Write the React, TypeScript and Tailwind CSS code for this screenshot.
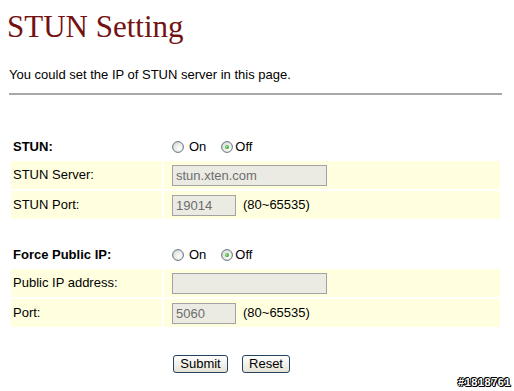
import React from 'react';

// Radio in the old XP look: grey-blue ring, green dot when checked
function Radio({ checked }: { checked?: boolean }) {
  return (
    <svg width="12" height="12" viewBox="0 0 12 12" className="shrink-0">
      <defs>
        <radialGradient id="rfill" cx="0.65" cy="0.65" r="0.7">
          <stop offset="0" stopColor="#ffffff" />
          <stop offset="1" stopColor="#dcdcd4" />
        </radialGradient>
        <radialGradient id="rdot" cx="0.4" cy="0.4" r="0.6">
          <stop offset="0" stopColor="#a6e8a0" />
          <stop offset="1" stopColor="#21a121" />
        </radialGradient>
      </defs>
      <circle cx="6" cy="6" r="5.4" fill="url(#rfill)" stroke="#5f7383" strokeWidth="1" />
      {checked && <circle cx="6" cy="6" r="2" fill="url(#rdot)" />}
    </svg>
  );
}

function OnOff() {
  return (
    <div className="flex items-center text-[13px]">
      <Radio />
      <span className="ml-[5px]">On</span>
      <span className="ml-[15px]">
        <Radio checked />
      </span>
      <span className="ml-[2px]">Off</span>
    </div>
  );
}

function TextBox({ value, width }: { value: string; width: string }) {
  return (
    <div
      className={`${width} h-[21px] border border-[#a3a3a3] bg-[#ebebe4] text-[#6d6d6d] text-[13px] leading-[19px] pl-[3px]`}
    >
      {value}
    </div>
  );
}

const range = <span className="ml-[7px] text-[13px]">(80~65535)</span>;

export default function App() {
  return (
    <div className="relative w-[514px] h-[391px] overflow-hidden bg-white text-black font-['Liberation_Sans',Arial,sans-serif]">
      <div className="pl-[9px]">
        {/* Header */}
        <h1 className="pt-[11px] pl-[-2px] -ml-[2px] font-['Liberation_Serif','Times_New_Roman',serif] text-[31px] leading-[31px] text-[#731212]">
          STUN Setting
        </h1>
        <p className="mt-[25px] text-[13px] leading-[15px]">
          You could set the IP of STUN server in this page.
        </p>
        <div className="mt-[11px] w-[493px] h-[2px] bg-[#a8a8a8]" />

        {/* Settings table */}
        <table className="mt-[38px] w-[493px] border-separate border-spacing-[2px] text-[13px]">
          <tbody>
            <tr className="h-[24px]">
              <td className="w-[151px] pl-[2px] font-bold align-middle">STUN:</td>
              <td className="pl-[8px] align-middle">
                <OnOff />
              </td>
            </tr>
            <tr className="h-[28px] bg-[#ffffe0]">
              <td className="pl-[2px] align-middle">STUN Server:</td>
              <td className="pl-[8px] align-middle">
                <TextBox value="stun.xten.com" width="w-[155px]" />
              </td>
            </tr>
            <tr className="h-[28px] bg-[#ffffe0]">
              <td className="pl-[2px] align-middle">STUN Port:</td>
              <td className="pl-[8px] align-middle">
                <div className="flex items-center">
                  <TextBox value="19014" width="w-[64px]" />
                  {range}
                </div>
              </td>
            </tr>
            <tr className="h-[20px]">
              <td colSpan={2} />
            </tr>
            <tr className="h-[24px]">
              <td className="pl-[2px] font-bold align-middle">Force Public IP:</td>
              <td className="pl-[8px] align-middle">
                <OnOff />
              </td>
            </tr>
            <tr className="h-[28px] bg-[#ffffe0]">
              <td className="pl-[2px] align-middle">Public IP address:</td>
              <td className="pl-[8px] align-middle">
                <TextBox value="" width="w-[155px]" />
              </td>
            </tr>
            <tr className="h-[28px] bg-[#ffffe0]">
              <td className="pl-[2px] align-middle">Port:</td>
              <td className="pl-[8px] align-middle">
                <div className="flex items-center">
                  <TextBox value="5060" width="w-[64px]" />
                  {range}
                </div>
              </td>
            </tr>
          </tbody>
        </table>

        {/* Buttons */}
        <div className="mt-[26px] ml-[164px] flex gap-[14px]">
          <button className="w-[55px] h-[18px] rounded-[3px] border border-[#24435f] bg-gradient-to-b from-white to-[#e6e3d6] text-[13px] leading-[16px]">
            Submit
          </button>
          <button className="w-[48px] h-[18px] rounded-[3px] border border-[#24435f] bg-gradient-to-b from-white to-[#e6e3d6] text-[13px] leading-[16px]">
            Reset
          </button>
        </div>
      </div>

      {/* watermark */}
      <div className="absolute right-[3px] bottom-[3px] font-bold text-[11px] leading-[12px] text-white tracking-[0.5px] [text-shadow:1px_0_0_#000,-1px_0_0_#000,0_1px_0_#000,0_-1px_0_#000,1px_1px_0_#000,-1px_-1px_0_#000]">
        #1818761
      </div>
    </div>
  );
}
